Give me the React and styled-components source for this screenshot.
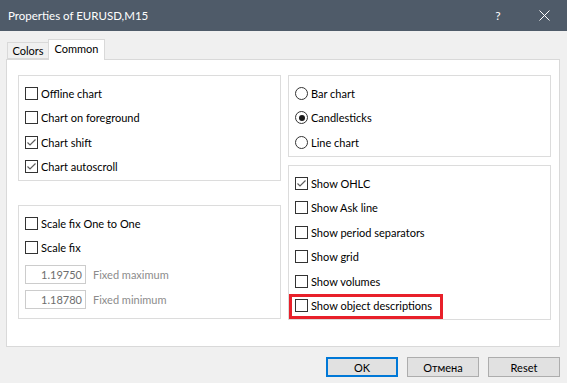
import React from 'react';
import styled, { createGlobalStyle } from 'styled-components';

const GlobalStyle = createGlobalStyle`
  html, body {
    margin: 0;
    padding: 0;
  }

  body {
    background: #f0f0f0;
    color: #000;
    font-family: Lato, "Liberation Sans", sans-serif;
    font-size: 11px;
  }
`;

const leftOptions = [
  { label: 'Offline chart', checked: false },
  { label: 'Chart on foreground', checked: false },
  { label: 'Chart shift', checked: true },
  { label: 'Chart autoscroll', checked: true },
];

const chartTypes = [
  { label: 'Bar chart', selected: false },
  { label: 'Candlesticks', selected: true },
  { label: 'Line chart', selected: false },
];

const showOptions = [
  { label: 'Show OHLC', checked: true },
  { label: 'Show Ask line', checked: false },
  { label: 'Show period separators', checked: false },
  { label: 'Show grid', checked: false },
  { label: 'Show volumes', checked: false },
  { label: 'Show object descriptions', checked: false, marked: true },
];

function CheckBox({ checked }) {
  return (
    <Box>
      {checked && (
        <svg width="11" height="11" viewBox="0 0 11 11">
          <polyline points="1.5,5.5 4,8 9.5,2.5" fill="none" stroke="#5c5c5c" strokeWidth="1.2" />
        </svg>
      )}
    </Box>
  );
}

function Option({ label, checked, marked }) {
  return (
    <Row>
      <CheckBox checked={checked} />
      <Label>{label}</Label>
      {marked && <Highlight />}
    </Row>
  );
}

function App() {
  return (
    <Window>
      <GlobalStyle />
      <TitleBar>
        <Title>Properties of EURUSD,M15</Title>
        <TitleButton>?</TitleButton>
        <TitleButton>
          <svg width="11" height="11" viewBox="0 0 11 11">
            <path d="M0.5 0.5 L10.5 10.5 M10.5 0.5 L0.5 10.5" stroke="#fff" strokeWidth="1" />
          </svg>
        </TitleButton>
      </TitleBar>

      <Tabs>
        <Tab $width={42}>Colors</Tab>
        <Tab $width={57} $active>Common</Tab>
      </Tabs>

      <Panel>
        <Column>
          <Group $height={106}>
            {leftOptions.map((o) => (
              <Option key={o.label} {...o} />
            ))}
          </Group>
          <Group $height={114}>
            <Option label="Scale fix One to One" />
            <Option label="Scale fix" />
            <InputRow $first>
              <Field>1.19750</Field>
              <FieldLabel>Fixed maximum</FieldLabel>
            </InputRow>
            <InputRow>
              <Field>1.18780</Field>
              <FieldLabel>Fixed minimum</FieldLabel>
            </InputRow>
          </Group>
        </Column>

        <Column $gap={8}>
          <Group $height={82}>
            {chartTypes.map((o) => (
              <Row key={o.label}>
                <Radio $selected={o.selected} />
                <Label>{o.label}</Label>
              </Row>
            ))}
          </Group>
          <Group $height={155}>
            {showOptions.map((o) => (
              <Option key={o.label} {...o} />
            ))}
          </Group>
        </Column>
      </Panel>

      <Buttons>
        <Button $default>OK</Button>
        <Button>Отмена</Button>
        <Button>Reset</Button>
      </Buttons>
    </Window>
  );
}

export default App;

const Window = styled.div`
  width: 567px;
  height: 383px;
  background: #f0f0f0;
  display: flex;
  flex-direction: column;
  overflow: hidden;
`;

const TitleBar = styled.div`
  height: 31px;
  background: #4f5b69;
  color: #fff;
  display: flex;
  align-items: center;
  padding-left: 8px;
  font-size: 11.5px;
  flex-shrink: 0;
`;

const Title = styled.div`
  flex: 1;
`;

const TitleButton = styled.div`
  width: 46px;
  height: 31px;
  display: flex;
  align-items: center;
  justify-content: center;
  font-size: 12px;
  flex-shrink: 0;
`;

const Tabs = styled.div`
  display: flex;
  align-items: flex-end;
  height: 20px;
  margin-top: 8px;
  padding-left: 7px;
  position: relative;
  z-index: 1;
`;

const Tab = styled.div`
  box-sizing: border-box;
  width: ${(p) => p.$width}px;
  height: ${(p) => (p.$active ? 21 : 17)}px;
  margin-bottom: ${(p) => (p.$active ? -1 : 0)}px;
  margin-left: ${(p) => (p.$active ? -1 : 0)}px;
  padding-top: ${(p) => (p.$active ? 2 : 1)}px;
  background: ${(p) => (p.$active ? '#fff' : '#f0f0f0')};
  border: 1px solid #d9d9d9;
  border-bottom: ${(p) => (p.$active ? 'none' : '1px solid #d9d9d9')};
  display: flex;
  justify-content: center;
  align-items: ${(p) => (p.$active ? 'flex-start' : 'center')};
  line-height: 14px;
`;

const Panel = styled.div`
  box-sizing: border-box;
  margin: 0 7px 0 6px;
  height: 288px;
  background: #fff;
  border: 1px solid #d9d9d9;
  padding: 15px 8px 0 11px;
  display: grid;
  grid-template-columns: 263px 263px;
  column-gap: 7px;
  align-items: start;
`;

const Column = styled.div`
  display: flex;
  flex-direction: column;
  gap: ${(p) => p.$gap ?? 24}px;
`;

const Group = styled.div`
  box-sizing: border-box;
  height: ${(p) => p.$height}px;
  border: 1px solid #dcdcdc;
  padding: 5px 6px 0 6px;
`;

const Row = styled.div`
  position: relative;
  height: 24.5px;
  display: flex;
  align-items: center;
  gap: 3px;
`;

const Box = styled.div`
  box-sizing: border-box;
  width: 13px;
  height: 13px;
  border: 1px solid #333;
  background: #fff;
  display: flex;
  align-items: center;
  justify-content: center;
  flex-shrink: 0;
`;

const Radio = styled.div`
  box-sizing: border-box;
  width: 13px;
  height: 13px;
  border: 1px solid #333;
  border-radius: 50%;
  background: #fff;
  display: flex;
  align-items: center;
  justify-content: center;
  flex-shrink: 0;

  &::after {
    content: '';
    display: ${(p) => (p.$selected ? 'block' : 'none')};
    width: 6px;
    height: 6px;
    border-radius: 50%;
    background: #1a1a1a;
  }
`;

const Label = styled.span`
  white-space: nowrap;
`;

const Highlight = styled.div`
  position: absolute;
  left: -6px;
  top: 0;
  width: 154px;
  height: 25px;
  box-sizing: border-box;
  border: 3px solid #e8202a;
  pointer-events: none;
`;

const InputRow = styled.div`
  height: 25px;
  margin-top: ${(p) => (p.$first ? 1.5 : 0)}px;
  display: flex;
  align-items: center;
  gap: 7px;
`;

const Field = styled.div`
  box-sizing: border-box;
  width: 61px;
  height: 19px;
  border: 1px solid #cccccc;
  background: #fff;
  color: #6d6d6d;
  text-align: right;
  padding-right: 3px;
  line-height: 17px;
`;

const FieldLabel = styled.span`
  color: #8c8c8c;
`;

const Buttons = styled.div`
  display: flex;
  justify-content: flex-end;
  gap: 9px;
  margin: 10px 7px 0 0;
`;

const Button = styled.div`
  box-sizing: border-box;
  width: 72px;
  height: 20px;
  background: #e1e1e1;
  border: ${(p) => (p.$default ? '2px solid #0078d7' : '1px solid #adadad')};
  display: flex;
  align-items: center;
  justify-content: center;
`;
